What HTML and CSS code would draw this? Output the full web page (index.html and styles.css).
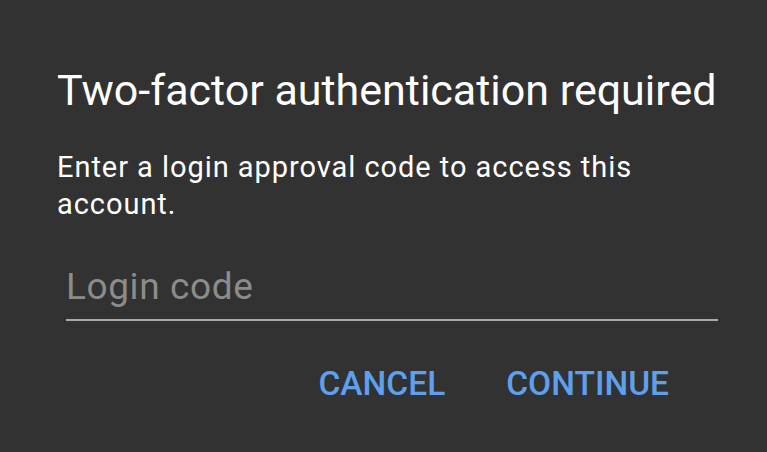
FILE: index.html
```html
<!DOCTYPE html>
<html>
<head>
<meta charset="utf-8">
<link rel="stylesheet" href="styles.css">
</head>
<body>
<div class="dialog">
  <h1 class="title">Two-factor authentication required</h1>
  <p class="message">Enter a login approval code to access this account.</p>
  <div class="field">
    <span class="placeholder">Login code</span>
  </div>
  <div class="actions">
    <span class="btn">CANCEL</span>
    <span class="btn">CONTINUE</span>
  </div>
</div>
</body>
</html>
```
FILE: styles.css
```css
html, body {
  margin: 0;
  padding: 0;
  background: #323232;
  width: 767px;
  height: 452px;
  overflow: hidden;
}
.dialog {
  font-family: Roboto, "Noto Sans", sans-serif;
  padding: 60px 49px 0 57px;
  display: flex;
  flex-direction: column;
}
.title {
  margin: 0;
  font-weight: 400;
  font-size: 43px;
  line-height: 60px;
  color: #ffffff;
  white-space: nowrap;
}
.message {
  margin: 29px 0 0 0;
  font-size: 29px;
  letter-spacing: 0.95px;
  line-height: 37px;
  color: #ffffff;
  width: 620px;
}
.field {
  margin: 39px 0 0 9px;
  border-bottom: 2px solid #a9a9a9;
  height: 57px;
  display: flex;
  align-items: flex-start;
}
.placeholder {
  font-size: 37px;
  letter-spacing: 0.6px;
  color: #8c8c8c;
  line-height: 50px;
}
.actions {
  display: flex;
  justify-content: flex-end;
  gap: 61px;
  margin-top: 43px;
  padding-right: 49px;
}
.btn {
  font-size: 33.5px;
  font-weight: 500;
  color: #5ea0ee;
  line-height: 40px;
}
```
